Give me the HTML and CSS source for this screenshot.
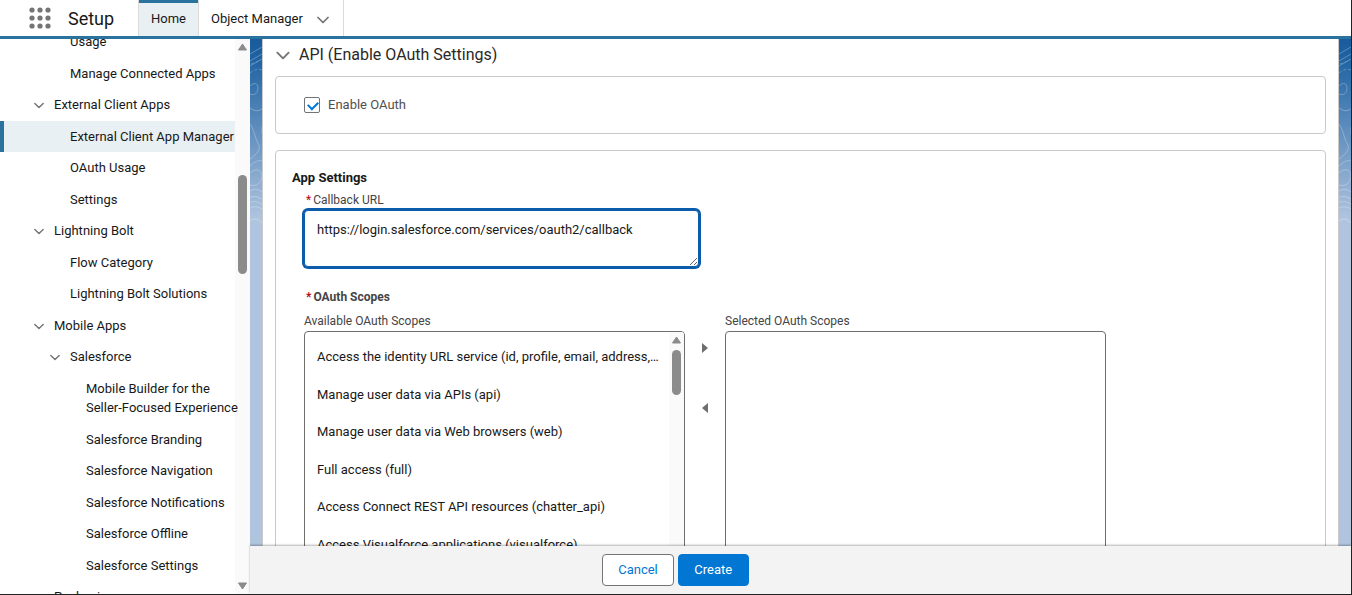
FILE: index.html
```html
<!DOCTYPE html>
<html lang="en">
<head>
<meta charset="utf-8">
<title>External Client App Manager | Setup</title>
<link rel="stylesheet" href="styles.css">
</head>
<body>
<svg class="defs" width="0" height="0" aria-hidden="true">
  <symbol id="chevron" viewBox="0 0 12 8"><path d="M1 1.500L6 6.500L11 1.500" fill="none" stroke="currentColor" stroke-width="1.700" stroke-linecap="round" stroke-linejoin="round"/></symbol>
  <symbol id="up" viewBox="0 0 9 8"><path d="M4.500 1L8.500 7H0.500Z" fill="currentColor" stroke="currentColor" stroke-linejoin="round"/></symbol>
  <symbol id="contours" viewBox="0 0 12 220">
    <g fill="none" stroke="#fff" stroke-width="0.800" opacity="0.350">
      <path d="M0 15L12 8M0 22L12 15M0 27L12 20" />
      <path d="M0 34Q6 29 12 31M1 25L11 21" stroke-dasharray="3 2"/>
      <path d="M0 47C4 43 8 44 8 49S5 57 0 55M0 69Q6 74 12 70M0 85C4 90 5 100 9 106C11 112 4 117 0 120M12 88V95"/>
      <path d="M0 127Q7 120 12 122M0 134C5 129 12 130 12 137S6 148 0 146M0 152Q6 148 12 153M0 158Q6 156 12 160M0 163Q6 161 12 165M0 169Q6 166 12 170M0 182Q6 177 12 184"/>
    </g>
  </symbol>
</svg>
<header class="topbar">
  <button class="launcher" aria-label="App Launcher">
    <svg width="22" height="22" viewBox="0 0 22 22" fill="#747474"><circle cx="3" cy="3" r="2.600"/><circle cx="11" cy="3" r="2.600"/><circle cx="19" cy="3" r="2.600"/><circle cx="3" cy="11" r="2.600"/><circle cx="11" cy="11" r="2.600"/><circle cx="19" cy="11" r="2.600"/><circle cx="3" cy="19" r="2.600"/><circle cx="11" cy="19" r="2.600"/><circle cx="19" cy="19" r="2.600"/></svg>
  </button>
  <span class="app-name">Setup</span>
  <nav class="tabs" aria-label="Setup tabs">
    <a class="tab active" href="#">Home</a>
    <div class="tab-menu">
      <a class="tab" href="#">Object Manager</a>
      <button class="tab-toggle" aria-label="Object Manager menu"><svg width="12" height="8"><use href="#chevron"/></svg></button>
    </div>
  </nav>
</header>
<div class="workspace">
  <aside class="sidebar">
    <nav class="tree" aria-label="Setup menu">
      <ul class="tree-list">
        <li><a class="node level-2" href="#">Usage</a></li>
        <li><a class="node level-2" href="#">Manage Connected Apps</a></li>
        <li><a class="node level-1" href="#"><svg class="caret" width="10" height="7"><use href="#chevron"/></svg>External Client Apps</a></li>
        <li><a class="node level-2 selected" href="#">External Client App Manager</a></li>
        <li><a class="node level-2" href="#">OAuth Usage</a></li>
        <li><a class="node level-2" href="#">Settings</a></li>
        <li><a class="node level-1" href="#"><svg class="caret" width="10" height="7"><use href="#chevron"/></svg>Lightning Bolt</a></li>
        <li><a class="node level-2" href="#">Flow Category</a></li>
        <li><a class="node level-2" href="#">Lightning Bolt Solutions</a></li>
        <li><a class="node level-1" href="#"><svg class="caret" width="10" height="7"><use href="#chevron"/></svg>Mobile Apps</a></li>
        <li><a class="node level-2" href="#"><svg class="caret" width="10" height="7"><use href="#chevron"/></svg>Salesforce</a></li>
        <li><a class="node level-3" href="#">Mobile Builder for the<br>Seller-Focused Experience</a></li>
        <li><a class="node level-3" href="#">Salesforce Branding</a></li>
        <li><a class="node level-3" href="#">Salesforce Navigation</a></li>
        <li><a class="node level-3" href="#">Salesforce Notifications</a></li>
        <li><a class="node level-3" href="#">Salesforce Offline</a></li>
        <li><a class="node level-3" href="#">Salesforce Settings</a></li>
        <li><a class="node level-1" href="#">Packaging</a></li>
      </ul>
    </nav>
    <div class="scrollbar" aria-hidden="true">
      <svg width="9" height="8"><use href="#up"/></svg>
      <span class="thumb"></span>
      <svg class="down" width="9" height="8"><use href="#up"/></svg>
    </div>
  </aside>
  <main class="content">
    <div class="stage">
      <svg class="rail" width="12" height="220" aria-hidden="true"><use href="#contours"/></svg>
      <div class="card">
        <h2 class="section-title"><svg width="14" height="9"><use href="#chevron"/></svg>API (Enable OAuth Settings)</h2>
        <section class="panel">
          <label class="check"><input type="checkbox" checked><span>Enable OAuth</span></label>
        </section>
        <section class="panel settings">
          <h3 class="panel-title">App Settings</h3>
          <div class="fields">
            <label class="label required" for="callback"><abbr>*</abbr>Callback URL</label>
            <textarea class="callback" id="callback">https://login.salesforce.com/services/oauth2/callback</textarea>
            <div class="label required strong"><abbr>*</abbr>OAuth Scopes</div>
            <div class="dueling">
              <div class="picker">
                <span class="label" id="available">Available OAuth Scopes</span>
                <div class="box">
                  <ul class="options" role="listbox" aria-labelledby="available">
                    <li role="option">Access the identity URL service (id, profile, email, address, phone)</li>
                    <li role="option">Manage user data via APIs (api)</li>
                    <li role="option">Manage user data via Web browsers (web)</li>
                    <li role="option">Full access (full)</li>
                    <li role="option">Access Connect REST API resources (chatter_api)</li>
                    <li role="option">Access Visualforce applications (visualforce)</li>
                  </ul>
                  <div class="scrollbar" aria-hidden="true">
                    <svg width="9" height="8"><use href="#up"/></svg>
                    <span class="thumb"></span>
                  </div>
                </div>
              </div>
              <div class="movers">
                <button aria-label="Move to selected"><svg width="8" height="10" viewBox="0 0 8 10"><path d="M1 0L7 5L1 10Z" fill="currentColor"/></svg></button>
                <button aria-label="Move to available"><svg width="8" height="10" viewBox="0 0 8 10"><path d="M7 0L1 5L7 10Z" fill="currentColor"/></svg></button>
              </div>
              <div class="picker">
                <span class="label" id="chosen">Selected OAuth Scopes</span>
                <div class="box"><ul class="options" role="listbox" aria-labelledby="chosen"></ul></div>
              </div>
            </div>
          </div>
        </section>
      </div>
      <svg class="rail" width="12" height="220" aria-hidden="true"><use href="#contours"/></svg>
    </div>
    <footer class="actions">
      <button class="btn">Cancel</button>
      <button class="btn primary">Create</button>
    </footer>
  </main>
</div>
</body>
</html>
```
FILE: styles.css
```css
* { box-sizing: border-box; }
body {
  margin: 0;
  height: 100vh;
  display: flex;
  flex-direction: column;
  overflow: hidden;
  border-right: 1px solid #222;
  border-bottom: 1px solid #222;
  background: #fff;
  color: #181818;
  font: 13px/1.5 "Segoe UI", Roboto, sans-serif;
}
ul, h2, h3 { margin: 0; padding: 0; list-style: none; }
a { color: inherit; text-decoration: none; }
button, textarea { font: inherit; color: inherit; }
svg { display: block; flex: none; }
.defs { position: absolute; }

.topbar {
  flex: none;
  height: 39px;
  display: flex;
  align-items: stretch;
  border-bottom: 3px solid #2a739e;
}
.launcher { padding: 0 0 0 29px; border: 0; background: none; }
.app-name { padding-left: 17px; width: 87px; font-size: 18px; line-height: 38px; }
.tabs { display: flex; line-height: 38px; }
.tab { display: block; padding: 0 0 0 12px; }
.tab.active {
  width: 61px;
  padding: 0;
  border: solid #dddbda;
  border-width: 0 1px;
  box-shadow: inset 0 3px #2a739e;
  background: #e8f0f3;
  text-align: center;
}
.tab-menu { display: flex; width: 145px; justify-content: space-between; border-right: 1px solid #dddbda; }
.tab-toggle { padding: 3px 14px 0 0; border: 0; background: none; color: #747474; }

.workspace { flex: 1; min-height: 0; display: flex; }
.sidebar { flex: none; width: 250px; display: flex; overflow: hidden; }
.tree { flex: 1; min-width: 0; }
.tree-list { margin-top: -13px; }
.node {
  display: block;
  position: relative;
  padding: 6px 0;
  border-left: 4px solid transparent;
  white-space: nowrap;
}
.level-1 { padding-left: 50px; }
.level-2 { padding-left: 66px; }
.level-3 { padding-left: 82px; }
.selected { border-left-color: #2a739e; background: #e8f0f3; }
.caret { position: absolute; top: 13px; margin-left: -20px; color: #747474; }

.scrollbar {
  flex: none;
  width: 15px;
  display: flex;
  flex-direction: column;
  align-items: center;
  padding: 4px 0;
  background: #fafafa;
  color: #8b8b8b;
}
.thumb { width: 9px; border-radius: 5px; background: #8b8b8b; }
.sidebar .thumb { height: 99px; margin-top: 124px; }
.down { margin-top: auto; transform: rotate(180deg); }

.content { flex: 1; min-width: 0; display: flex; flex-direction: column; }
.stage {
  flex: 1;
  min-height: 0;
  display: flex;
  overflow: hidden;
  background: linear-gradient(#195b9c, #1f63a3 20px, #b0c4df 180px);
}
.card {
  flex: 1;
  min-width: 0;
  padding: 0 12px;
  border: solid #c9c9c9;
  border-width: 0 1px;
  background: #fff;
}
.section-title {
  display: flex;
  align-items: center;
  gap: 9px;
  padding: 4px 0 9px 1px;
  font-size: 16px;
  font-weight: 400;
  color: #2b2826;
}
.section-title svg { color: #747474; }
.panel { margin-bottom: 16px; padding: 0 16px; border: 1px solid #c9c9c9; border-radius: 4px; }
.check { display: flex; align-items: center; gap: 8px; height: 56px; padding-left: 12px; color: #514f4d; }
.check input {
  appearance: none;
  width: 16px;
  height: 16px;
  margin: 0;
  border: 1px solid #747474;
  border-radius: 2px;
  background: #fff;
  position: relative;
}
.check input:checked::after {
  content: "";
  position: absolute;
  left: 3px;
  top: 3px;
  width: 8px;
  height: 5px;
  border: solid #0176d3;
  border-width: 0 0 2px 2px;
  transform: rotate(-45deg);
}
.settings { padding-top: 16px; }
.panel-title { font-size: 13px; line-height: 22px; }
.fields { padding: 2px 12px 0; }
.label { display: block; font-size: 12px; line-height: 18px; color: #444; }
.required { display: flex; gap: 2px; padding-left: 2px; }
.required abbr { color: #ba0517; }
.strong { font-weight: 700; margin-top: 21px; }
.callback {
  display: block;
  width: 395px;
  max-width: 100%;
  height: 57px;
  margin-top: 1px;
  padding: 9px 12px;
  border: 1px solid #0b5cab;
  border-radius: 4px;
  box-shadow: 0 0 0 2px #0b5cab;
  outline: 0;
}
.dueling { display: flex; margin-top: 6px; }
.picker { flex: 0 1 381px; min-width: 0; }
.box { display: flex; height: 300px; margin-top: 1px; border: 1px solid #706e6b; border-radius: 4px; overflow: hidden; }
.options { flex: 1; min-width: 0; padding-top: 6px; }
.options li { padding: 9px 8px 9px 12px; overflow: hidden; white-space: nowrap; text-overflow: ellipsis; }
.box .thumb { height: 45px; margin-top: 6px; }
.movers { flex: none; width: 40px; display: flex; flex-direction: column; align-items: center; gap: 28px; padding-top: 20px; color: #706e6b; }
.movers button { display: flex; align-items: center; justify-content: center; width: 32px; height: 32px; padding: 0; border: 0; background: none; }

.actions {
  position: relative;
  flex: none;
  display: flex;
  justify-content: center;
  gap: 4px;
  padding: 8px 250px 8px 0;
  background: #f3f3f3;
  box-shadow: 0 -1px 2px rgba(0, 0, 0, 0.3);
}
.btn { min-width: 71px; height: 32px; padding: 0 15px; border: 1px solid #747474; border-radius: 4px; background: #fff; color: #0176d3; }
.primary { border-color: #0176d3; background: #0176d3; color: #fff; }
```
